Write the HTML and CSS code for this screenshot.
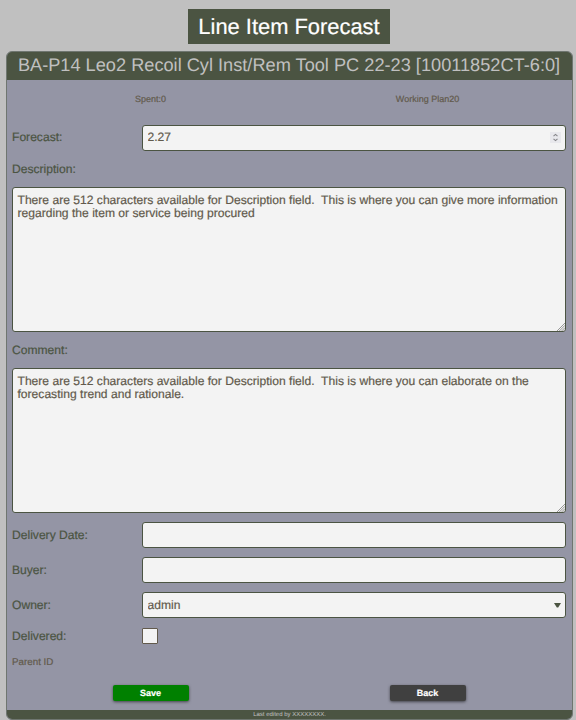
FILE: index.html
```html
<!DOCTYPE html>
<html lang="en">
<head>
<meta charset="utf-8">
<title>Line Item Forecast</title>
<link rel="stylesheet" href="styles.css">
</head>
<body>
<h1 class="title">Line Item Forecast</h1>
<form class="card">
  <h2 class="card-header">BA-P14 Leo2 Recoil Cyl Inst/Rem Tool PC 22-23 [10011852CT-6:0]</h2>
  <div class="card-body">
    <div class="summary"><span>Spent:0</span><span>Working Plan20</span></div>
    <div class="row forecast">
      <label for="forecast">Forecast:</label>
      <div class="control">
        <input class="field" id="forecast" type="text" value="2.27">
        <svg class="spinner" viewBox="0 0 11 11"><rect width="11" height="11" fill="#e8e8ec"/><path d="M3.5 4.2 5.5 2.4 7.5 4.2M3.5 6.8 5.5 8.6 7.5 6.8" fill="none" stroke="#86868a" stroke-width="1.1"/></svg>
      </div>
    </div>
    <label class="block-label" for="description">Description:</label>
    <div class="control">
      <textarea class="area" id="description" spellcheck="false">There are 512 characters available for Description field.&nbsp; This is where you can give more information regarding the item or service being procured</textarea>
      <svg class="grip" viewBox="0 0 8 8"><path d="M0 8 8 0M2.3 8 8 2.3M4.6 8 8 4.6M6.8 8 8 6.8" stroke="#8c8c8c" stroke-width=".9"/></svg>
    </div>
    <label class="block-label" for="comment">Comment:</label>
    <div class="control">
      <textarea class="area" id="comment" spellcheck="false">There are 512 characters available for Description field.&nbsp; This is where you can elaborate on the forecasting trend and rationale.</textarea>
      <svg class="grip" viewBox="0 0 8 8"><path d="M0 8 8 0M2.3 8 8 2.3M4.6 8 8 4.6M6.8 8 8 6.8" stroke="#8c8c8c" stroke-width=".9"/></svg>
    </div>
    <div class="fields">
      <div class="row"><label for="date">Delivery Date:</label><input class="field" id="date" type="text"></div>
      <div class="row"><label for="buyer">Buyer:</label><input class="field" id="buyer" type="text"></div>
      <div class="row">
        <label for="owner">Owner:</label>
        <div class="control">
          <select class="field" id="owner"><option>admin</option></select>
          <svg class="caret" viewBox="0 0 7 5"><path d="M0 0H7L4.2 4.4H2.8Z" fill="#4b5442"/></svg>
        </div>
      </div>
    </div>
    <div class="row delivered"><label for="delivered">Delivered:</label><input class="check" id="delivered" type="checkbox"></div>
    <p class="parent">Parent ID</p>
    <div class="actions">
      <button class="save" type="button">Save</button>
      <button class="back" type="button">Back</button>
    </div>
  </div>
  <footer class="card-footer">Last edited by XXXXXXXX.</footer>
</form>
</body>
</html>
```
FILE: styles.css
```css
* {
  box-sizing: border-box;
  text-rendering: geometricPrecision;
}

body {
  margin: 0;
  height: 720px;
  padding: 9px 3px 0 6px;
  overflow: hidden;
  background: #c0c0c0;
  color: #625a4c;
  font-family: "Liberation Sans", Arial, sans-serif;
  font-size: 12.1px;
}

.title {
  width: 202px;
  height: 35px;
  margin: 0 auto 7px 182px;
  background: #4b5442;
  color: #fff;
  font-size: 21.9px;
  font-weight: 400;
  line-height: 35px;
  text-align: center;
  white-space: nowrap;
  -webkit-text-stroke: .2px;
}

.card {
  height: 669px;
  border: 1px solid #6f7670;
  border-radius: 6px;
  background: #9495a5;
  overflow: hidden;
}

.card-header {
  height: 29px;
  margin: -1px -1px 0;
  padding-right: 1px;
  background: #4b5442;
  color: #c0c0c0;
  font-size: 18.2px;
  font-weight: 400;
  line-height: 28px;
  text-align: center;
  white-space: nowrap;
}

.card-body {
  height: 630px;
  padding: 0 6px 0 5px;
  -webkit-text-stroke: .2px;
}

.summary {
  display: grid;
  grid-template-columns: 1fr 1fr;
  height: 45px;
  line-height: 38px;
  font-size: 9px;
  text-align: center;
}

.row {
  display: grid;
  grid-template-columns: 130px 1fr;
  align-items: center;
}

label { color: #4b5442; }

.forecast label { padding-bottom: 2px; }

.control {
  position: relative;
  display: flex;
}

.field {
  appearance: none;
  width: 100%;
  height: 26px;
  padding: 0 4.5px 1px;
  border: 1px solid #4b5442;
  border-radius: 3px;
  background: #f3f3f3;
  color: #625a4c;
  font: 12.1px "Liberation Sans", Arial, sans-serif;
  -webkit-text-stroke: .2px;
}

.forecast .field { padding-bottom: 2px; }

.block-label {
  display: block;
  height: 36px;
  line-height: 36px;
}

.area {
  width: 100%;
  height: 145px;
  padding: 6px 3px 4px 4.5px;
  border: 1px solid #4b5442;
  border-radius: 3px;
  background: #f3f3f3;
  color: #625a4c;
  font: 12.1px/13.4px "Liberation Sans", Arial, sans-serif;
  -webkit-text-stroke: .2px;
  resize: none;
  overflow: hidden;
}

.spinner {
  position: absolute;
  top: 7px;
  right: 5px;
  width: 11px;
  height: 11px;
}

.grip {
  position: absolute;
  right: 1px;
  bottom: 1px;
  width: 8px;
  height: 8px;
}

.caret {
  position: absolute;
  top: 11px;
  right: 5px;
  width: 7px;
  height: 5px;
}

.fields {
  display: grid;
  gap: 9px;
  padding-top: 9px;
}

.delivered {
  height: 36px;
}

.check {
  appearance: none;
  width: 16px;
  height: 16px;
  margin: 0;
  border: 1px solid #625a4c;
  border-radius: 1px;
  background: #f3f3f3;
}

.parent {
  height: 31px;
  margin: 0;
  line-height: 18px;
  font-size: 9.8px;
}

.actions {
  display: grid;
  grid-template-columns: 1fr 1fr;
  justify-items: center;
}

.actions button {
  width: 76px;
  height: 16px;
  padding: 0;
  border: 0;
  border-radius: 2px;
  box-shadow: 0 1px 3px rgb(0 0 0 / 55%);
  color: #fff;
  font: bold 9px/16px "Liberation Sans", Arial, sans-serif;
}

.actions .save { background: #008000; }
.actions .back { background: #404040; }

.card-footer {
  height: 10px;
  margin: 0 -1px;
  background: #4b5442;
  color: #c0c0c0;
  font-size: 6px;
  line-height: 10px;
  text-align: center;
}
```
